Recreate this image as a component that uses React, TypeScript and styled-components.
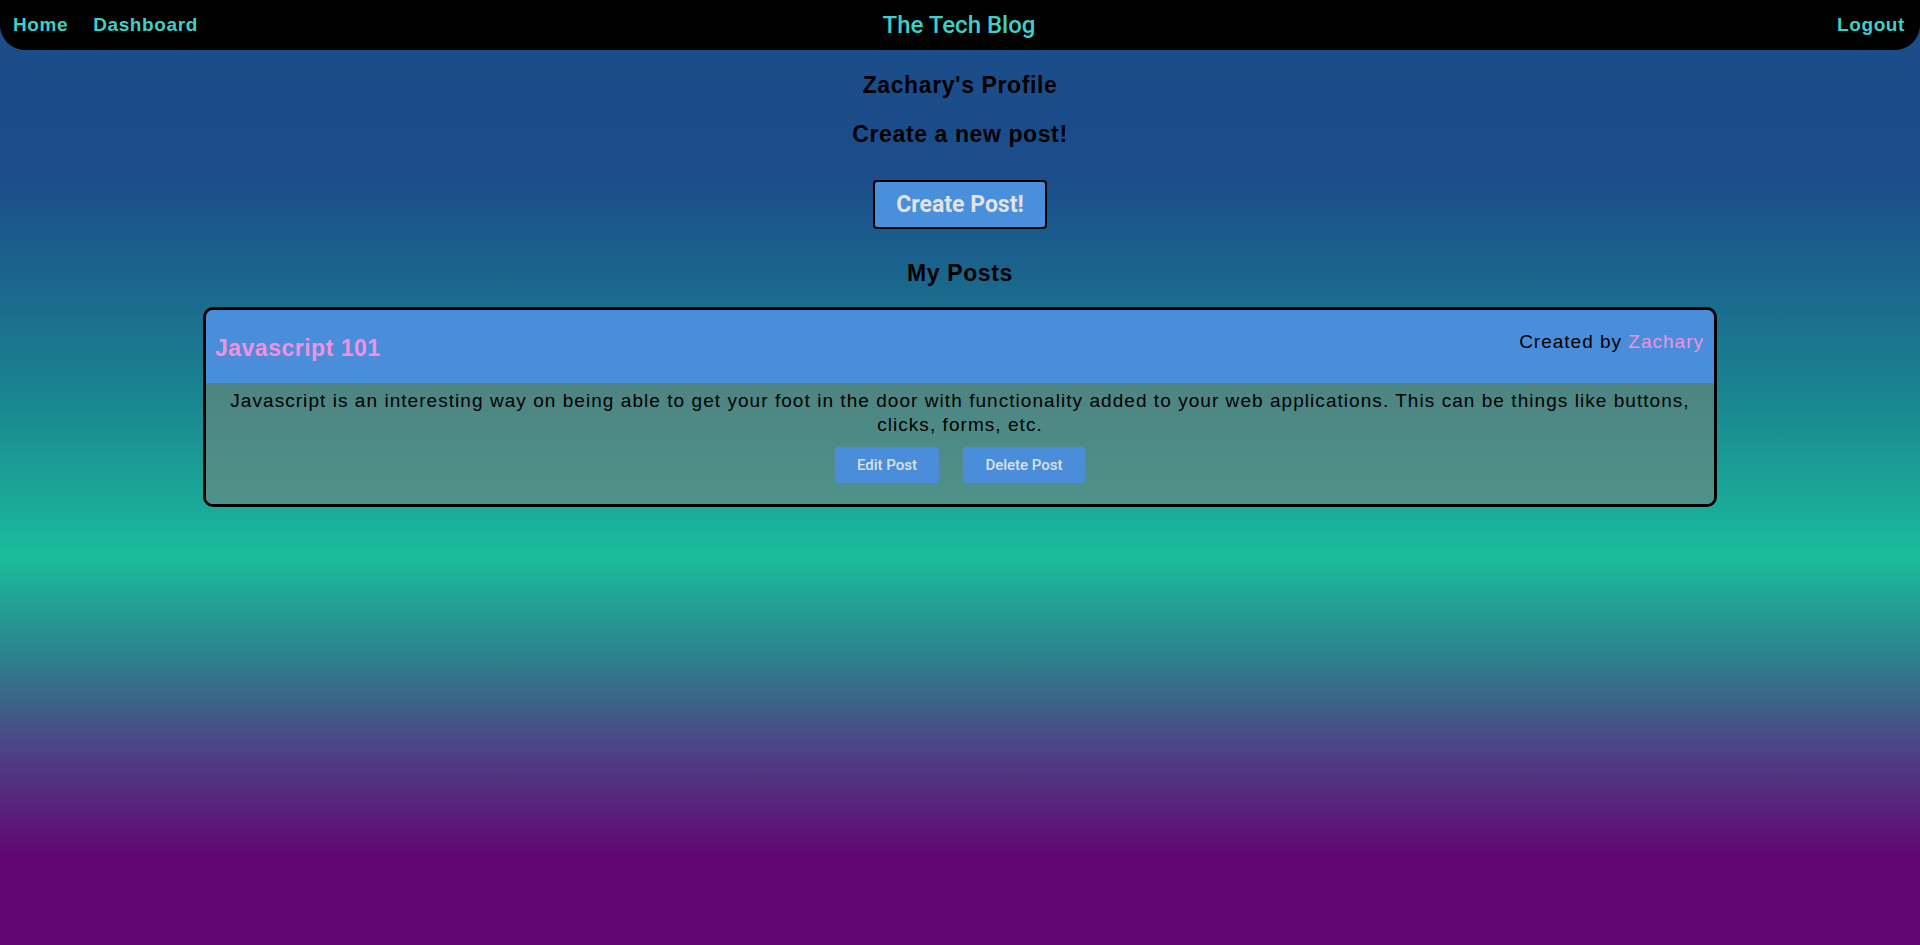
import React from "react";
import styled, { createGlobalStyle } from "styled-components";

const GlobalStyle = createGlobalStyle`
  html, body { margin: 0; padding: 0; }
  body {
    min-height: 945px;
    font-family: "Liberation Sans", Arial, sans-serif;
    background: linear-gradient(
      to bottom,
      #1c4c8b 0%,
      #1b4d8a 19%,
      #1a7f8f 40%,
      #1abc9c 59%,
      #2e7f8c 70%,
      #4a4a86 78%,
      #5a1f7c 86%,
      #620472 91%,
      #620472 100%
    );
    background-attachment: fixed;
  }
`;

const Page = styled.div`
  min-height: 945px;
  display: flex;
  flex-direction: column;
  align-items: center;
`;

const NavBar = styled.nav`
  width: 100%;
  box-sizing: border-box;
  height: 50px;
  background: #000;
  border-radius: 0 0 25px 25px;
  display: grid;
  grid-template-columns: 1fr auto 1fr;
  align-items: center;
  padding: 0 15px 0 13px;
`;

const NavLinks = styled.div<{ $end?: boolean }>`
  display: flex;
  gap: 25px;
  justify-content: ${(p) => (p.$end ? "flex-end" : "flex-start")};
`;

const NavLink = styled.a`
  color: #3fcfc6;
  font-family: "Liberation Sans", Arial, sans-serif;
  font-weight: 700;
  font-size: 19px;
  text-decoration: none;
  letter-spacing: 0.6px;
`;

const Brand = styled.h1`
  margin: 0;
  color: #3fcfc6;
  font-family: Roboto, sans-serif;
  font-weight: 500;
  font-size: 24px;
`;

const Heading = styled.h2<{ $top: number }>`
  margin: ${(p) => p.$top}px 0 0;
  font-family: "Liberation Sans", Arial, sans-serif;
  font-weight: 700;
  font-size: 23px;
  line-height: 28px;
  letter-spacing: 0.6px;
  color: #000;
`;

const CreateButton = styled.button`
  margin-top: 32px;
  width: 174px;
  height: 49px;
  background: #4a8fdb;
  border: 2px solid #000;
  border-radius: 4px;
  color: #e3e3e3;
  font-family: Roboto, sans-serif;
  font-weight: 700;
  font-size: 23px;
  cursor: pointer;
`;

const Card = styled.article`
  margin-top: 20px;
  width: 1514px;
  box-sizing: border-box;
  border: 3px solid #000;
  border-radius: 10px;
  overflow: hidden;
`;

const CardHeader = styled.header`
  height: 73px;
  background: #4a8edb;
  display: flex;
  justify-content: space-between;
  padding: 0 10px 0 9px;
`;

const PostTitle = styled.h3`
  margin: 24px 0 0;
  color: #f291dd;
  font-family: "Liberation Sans", Arial, sans-serif;
  font-weight: 700;
  font-size: 23px;
  line-height: 28px;
  letter-spacing: 0.5px;
`;

const Byline = styled.p`
  margin: 20px 0 0;
  font-size: 19px;
  line-height: 24px;
  letter-spacing: 1px;
  color: #000;
`;

const Author = styled.span`
  color: #f291dd;
`;

const CardBody = styled.div`
  background: linear-gradient(to bottom, #4d8483, #4d9389);
  padding: 6px 20px 21px;
  display: flex;
  flex-direction: column;
  align-items: center;
`;

const PostText = styled.p`
  margin: 0;
  text-align: center;
  font-size: 19px;
  line-height: 24px;
  letter-spacing: 1.05px;
  color: #000;
`;

const Actions = styled.div`
  margin-top: 10px;
  display: flex;
  gap: 24px;
`;

const SmallButton = styled.button<{ $w: number }>`
  width: ${(p) => p.$w}px;
  height: 36px;
  background: #4a8edb;
  border: none;
  border-radius: 4px;
  color: #dde0e4;
  font-family: Roboto, sans-serif;
  font-weight: 500;
  font-size: 15px;
  cursor: pointer;
`;

export default function App() {
  return (
    <>
      <GlobalStyle />
      <Page>
        <NavBar>
          <NavLinks>
            <NavLink href="#">Home</NavLink>
            <NavLink href="#">Dashboard</NavLink>
          </NavLinks>
          <Brand>The Tech Blog</Brand>
          <NavLinks $end>
            <NavLink href="#">Logout</NavLink>
          </NavLinks>
        </NavBar>
        <Heading $top={21}>Zachary's Profile</Heading>
        <Heading $top={21}>Create a new post!</Heading>
        <CreateButton>Create Post!</CreateButton>
        <Heading $top={30}>My Posts</Heading>
        <Card>
          <CardHeader>
            <PostTitle>Javascript 101</PostTitle>
            <Byline>
              Created by <Author>Zachary</Author>
            </Byline>
          </CardHeader>
          <CardBody>
            <PostText>
              Javascript is an interesting way on being able to get your foot in the door with functionality added to your
              web applications. This can be things like buttons, clicks, forms, etc.
            </PostText>
            <Actions>
              <SmallButton $w={104}>Edit Post</SmallButton>
              <SmallButton $w={122}>Delete Post</SmallButton>
            </Actions>
          </CardBody>
        </Card>
      </Page>
    </>
  );
}
